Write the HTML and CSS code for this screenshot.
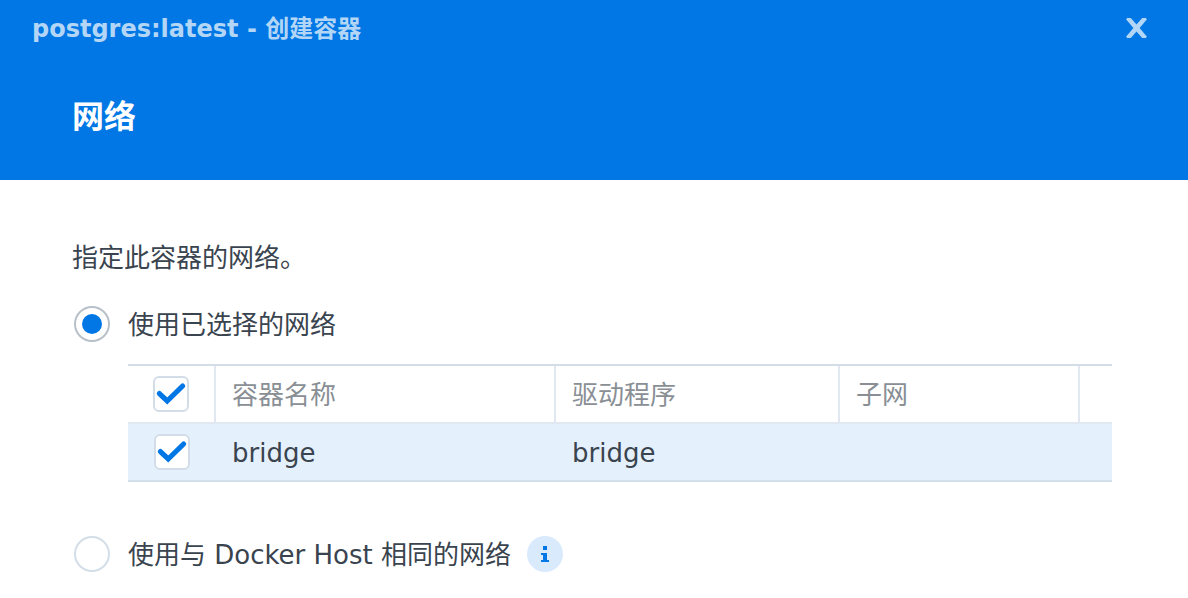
FILE: index.html
```html
<!DOCTYPE html>
<html lang="zh-CN">
<head>
<meta charset="utf-8">
<meta name="viewport" content="width=device-width, initial-scale=1">
<title>postgres:latest - 创建容器</title>
<link rel="stylesheet" href="styles.css">
</head>
<body>
<header class="header">
  <div class="titlebar">
    <span class="window-title">postgres:latest - 创建容器</span>
    <button class="close" type="button" aria-label="关闭">
      <svg width="24" height="24" viewBox="0 0 24 24" aria-hidden="true"><path d="M3 2H6.800L12.500 8.600L18.200 2H22L22.800 3.500L15.600 12L22.800 20.500L22 22H18.200L12.500 15.400L6.800 22H3L2.200 20.500L9.400 12L2.200 3.500z"/></svg>
    </button>
  </div>
  <h1 class="step-title">网络</h1>
</header>
<main class="content">
  <p class="description">指定此容器的网络。</p>
  <div class="option">
    <input class="radio" type="radio" name="network" id="selected-network" checked>
    <label for="selected-network">使用已选择的网络</label>
  </div>
  <table class="grid">
    <colgroup>
      <col class="col-check"><col class="col-name"><col class="col-driver"><col class="col-subnet"><col>
    </colgroup>
    <thead>
      <tr>
        <th class="check-cell"><input class="checkbox" type="checkbox" aria-label="全选" checked></th>
        <th>容器名称</th>
        <th>驱动程序</th>
        <th>子网</th>
        <th></th>
      </tr>
    </thead>
    <tbody>
      <tr>
        <td class="check-cell"><input class="checkbox" type="checkbox" aria-label="bridge" checked></td>
        <td>bridge</td>
        <td>bridge</td>
        <td></td>
        <td></td>
      </tr>
    </tbody>
  </table>
  <div class="option">
    <input class="radio" type="radio" name="network" id="host-network">
    <label for="host-network">使用与 Docker Host 相同的网络</label>
    <button class="info" type="button" aria-label="信息">
      <svg width="36" height="36" viewBox="0 0 36 36" aria-hidden="true"><path d="M16 10h4v4h-4zM14 17h6v7h2v2h-8v-2h2v-5h-2z"/></svg>
    </button>
  </div>
</main>
</body>
</html>
```
FILE: styles.css
```css
* {
  box-sizing: border-box;
}

body {
  margin: 0;
  background: #fff;
  color: #3a444f;
  font: 26px/36px "DejaVu Sans", "Noto Sans CJK SC", sans-serif;
}

.header {
  padding: 8px 32px 40px;
  background: #0077e4;
  color: #fff;
}

.titlebar {
  display: flex;
  align-items: center;
  justify-content: space-between;
  height: 40px;
}

.window-title {
  padding-top: 2px;
  color: #b3d6f7;
  font-size: 24px;
  font-weight: 700;
}

.close {
  display: flex;
  padding: 0;
  margin-right: 8px;
  border: 0;
  background: none;
  fill: #b3d6f7;
}

.step-title {
  margin: 46px 0 0 40px;
  font-size: 32px;
  line-height: 46px;
}

.content {
  padding: 60px 76px 26px 72px;
}

.description {
  margin: 0 0 30px;
}

.option {
  display: flex;
  align-items: center;
  gap: 18px;
  padding-left: 2px;
}

.option label {
  padding-top: 2px;
  line-height: 34px;
}

.radio {
  display: grid;
  place-items: center;
  appearance: none;
  width: 36px;
  height: 36px;
  margin: 0;
  border: 2px solid #d3dee8;
  border-radius: 50%;
  background: #fff;
}

.radio:checked {
  border-color: #b8c0c9;
}

.radio:checked::before {
  content: "";
  width: 20px;
  height: 20px;
  border-radius: 50%;
  background: #0077e4;
}

.grid {
  width: calc(100% - 56px);
  margin: 22px 0 54px 56px;
  border-top: 2px solid #d2dde8;
  border-bottom: 2px solid #d2e0ec;
  border-spacing: 0;
  table-layout: fixed;
}

.col-check {
  width: 88px;
}

.col-name {
  width: 340px;
}

.col-driver {
  width: 284px;
}

.col-subnet {
  width: 240px;
}

.grid th,
.grid td {
  padding: 2px 16px 0;
  text-align: left;
}

.grid th {
  height: 58px;
  border-right: 2px solid #e1e8ef;
  border-bottom: 2px solid #e1e8ef;
  color: #898f95;
  font-weight: 400;
}

.grid th:last-child {
  border-right: 0;
}

.grid td {
  height: 56px;
  background: #e4f0fc;
}

.grid .check-cell {
  padding: 0;
  text-align: center;
}

.checkbox {
  display: block;
  appearance: none;
  width: 36px;
  height: 36px;
  margin: 0 auto;
  border: 2px solid #d2dde8;
  border-radius: 6px;
  background: #fff;
}

.checkbox:checked {
  background: #fff url("data:image/svg+xml,%3Csvg xmlns='http://www.w3.org/2000/svg' viewBox='0 0 36 36'%3E%3Cpath d='M6.400 17.600l7.800 7.400L29.600 10' fill='none' stroke='%230077e4' stroke-width='5.200' stroke-linecap='round'/%3E%3C/svg%3E") center / 36px 36px border-box;
}

.info {
  display: flex;
  padding: 0;
  margin-left: -2px;
  border: 0;
  border-radius: 50%;
  background: #d9eafd;
  fill: #0077e4;
}
```
